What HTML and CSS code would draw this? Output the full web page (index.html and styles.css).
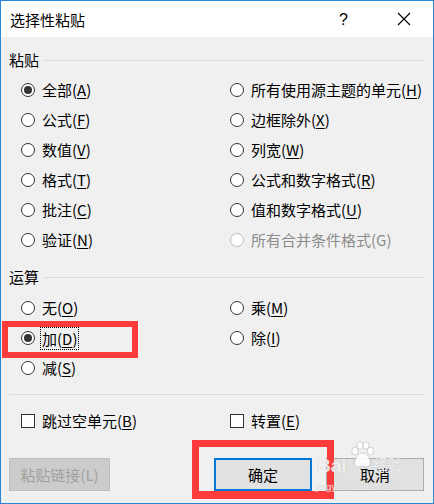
FILE: index.html
```html
<!DOCTYPE html>
<html lang="zh-CN">
<head>
    <meta charset="UTF-8" />
    <title>选择性粘贴</title>
    <link rel="stylesheet" href="styles.css">
</head>
<body>
<div class="dialog">
    <div class="titlebar">
        <span class="title">选择性粘贴</span>
        <span class="help">?</span>
        <span class="close">
            <svg width="14" height="14" viewBox="0 0 14 14"><path d="M1 1L13 13M13 1L1 13" stroke="#000" stroke-width="1.1" fill="none"/></svg>
        </span>
    </div>

    <div class="content">
        <div class="group-label"><span>粘贴</span><i class="rule"></i></div>
        <div class="options">
            <div class="opt"><span class="radio checked"></span>全部(<u>A</u>)</div>
            <div class="opt"><span class="radio"></span>所有使用源主题的单元(<u>H</u>)</div>
            <div class="opt"><span class="radio"></span>公式(<u>F</u>)</div>
            <div class="opt"><span class="radio"></span>边框除外(<u>X</u>)</div>
            <div class="opt"><span class="radio"></span>数值(<u>V</u>)</div>
            <div class="opt"><span class="radio"></span>列宽(<u>W</u>)</div>
            <div class="opt"><span class="radio"></span>格式(<u>T</u>)</div>
            <div class="opt"><span class="radio"></span>公式和数字格式(<u>R</u>)</div>
            <div class="opt"><span class="radio"></span>批注(<u>C</u>)</div>
            <div class="opt"><span class="radio"></span>值和数字格式(<u>U</u>)</div>
            <div class="opt"><span class="radio"></span>验证(<u>N</u>)</div>
            <div class="opt disabled"><span class="radio"></span>所有合并条件格式(G)</div>
        </div>

        <div class="group-label second"><span>运算</span><i class="rule"></i></div>
        <div class="options ops">
            <div class="opt"><span class="radio"></span>无(<u>O</u>)</div>
            <div class="opt"><span class="radio"></span>乘(<u>M</u>)</div>
            <div class="opt"><span class="radio checked"></span><span class="focus">加(<u>D</u>)</span></div>
            <div class="opt"><span class="radio"></span>除(<u>I</u>)</div>
            <div class="opt"><span class="radio"></span>减(<u>S</u>)</div>
            <div class="opt"></div>
        </div>

        <div class="separator"></div>

        <div class="options checks">
            <div class="opt"><span class="checkbox"></span>跳过空单元(<u>B</u>)</div>
            <div class="opt"><span class="checkbox"></span>转置(<u>E</u>)</div>
        </div>

        <div class="buttons">
            <button class="btn btn-disabled">粘贴链接(L)</button>
            <button class="btn btn-default">确定</button>
            <button class="btn">取消</button>
        </div>
    </div>

    <!-- 标注框 -->
    <div class="mark mark-add"></div>
    <div class="mark mark-ok"></div>

    <div class="watermark">
        <span class="wm-bai">Bai</span>
        <svg class="wm-paw" width="26" height="28" viewBox="0 0 26 28">
            <g fill="rgba(255,255,255,0.85)" stroke="rgba(170,170,170,0.6)" stroke-width="0.8">
                <ellipse cx="6" cy="10" rx="3.2" ry="4"/>
                <ellipse cx="11" cy="4.5" rx="3" ry="3.8"/>
                <ellipse cx="17" cy="4.5" rx="3" ry="3.8"/>
                <ellipse cx="21.5" cy="10" rx="3.2" ry="4"/>
                <path d="M13.5 12c-4 0-8 6-8 10c0 3 2.5 4 4.5 4c1.5 0 2.5-1 3.5-1s2 1 3.5 1c2 0 4.5-1 4.5-4c0-4-4-10-8-10z"/>
            </g>
        </svg>
        <span class="wm-jy">经验</span>
        <span class="wm-url">jingyan.baidu.com</span>
    </div>
</div>
</body>
</html>
```

FILE: styles.css
```css
* {
    box-sizing: border-box;
    margin: 0;
    padding: 0;
}

body {
    width: 434px;
    height: 504px;
    font-family: "Noto Sans CJK SC", "Microsoft YaHei", sans-serif;
    font-size: 15px;
    color: #000;
    background: #f0f0f0;
}

.dialog {
    position: relative;
    width: 434px;
    height: 504px;
    border: 1px solid #2a86d6;
    background: #f0f0f0;
    overflow: hidden;
}

.titlebar {
    height: 36px;
    background: #fff;
    display: flex;
    align-items: center;
    padding-top: 2px;
}

.title {
    margin-left: 9px;
    flex: 1;
    line-height: 20px;
}

.help {
    width: 14px;
    font-family: "Liberation Sans", sans-serif;
    font-size: 16px;
    margin-right: 44px;
}

.close {
    display: flex;
    margin-right: 22px;
    margin-top: -2px;
}

.content {
    padding: 0 9px 0 8px;
}

.group-label {
    display: flex;
    align-items: center;
    gap: 5px;
    height: 20px;
    line-height: 20px;
    margin-top: 13px;
}

.group-label.second {
    margin-top: 12px;
}

.rule {
    flex: 1;
    height: 1px;
    background: #dcdcdc;
    margin-top: 1px;
}

.options {
    display: grid;
    grid-template-columns: 209px 1fr;
    padding-left: 12px;
    margin-top: 5px;
}

.options.ops {
    margin-top: 6px;
}

.options.checks {
    margin-top: 11px;
}

.opt {
    height: 30px;
    display: flex;
    align-items: center;
    white-space: nowrap;
    line-height: 20px;
}

.opt u {
    text-decoration: underline;
    text-underline-offset: 2px;
    text-decoration-thickness: 1px;
}

.opt.disabled {
    color: #8c8c8c;
}

.radio {
    width: 14px;
    height: 14px;
    border: 1px solid #333;
    border-radius: 50%;
    background: #fff;
    margin-right: 7px;
    display: flex;
    align-items: center;
    justify-content: center;
    flex-shrink: 0;
}

.radio.checked::after {
    content: "";
    width: 8px;
    height: 8px;
    border-radius: 50%;
    background: #333;
}

.disabled .radio {
    border-color: #bcbcbc;
}

.checkbox {
    width: 14px;
    height: 14px;
    border: 1px solid #333;
    background: #fff;
    margin-right: 7px;
    flex-shrink: 0;
}

.focus {
    display: inline-block;
    line-height: 21px;
    padding: 0 1px;
    margin-left: -1px;
    outline: 1px dotted #000;
}

.separator {
    height: 1px;
    background: #dcdcdc;
    margin-top: 11px;
}

.buttons {
    display: flex;
    gap: 14px;
    margin-top: 22px;
}

.btn {
    height: 33px;
    width: 98px;
    font-family: inherit;
    font-size: 15px;
    color: #000;
    background: #e1e1e1;
    border: 1px solid #adadad;
}

.btn-disabled {
    width: 101px;
    color: #a0a0a0;
    background: #cccccc;
    border-color: #bfbfbf;
    margin-right: auto;
}

.btn-default {
    border: 2px solid #0078d7;
}

.mark {
    position: absolute;
    border: 6px solid #fe3b3b;
}

.mark-add {
    left: 1px;
    top: 320px;
    width: 136px;
    height: 37px;
}

.mark-ok {
    left: 191px;
    top: 439px;
    width: 142px;
    height: 59px;
    border-width: 7px;
    border-bottom-width: 8px;
}

.watermark {
    position: absolute;
    left: 314px;
    top: 440px;
    width: 100px;
    height: 54px;
    color: rgba(255, 255, 255, 0.8);
    text-shadow: 0 0 1px rgba(150, 150, 150, 0.6);
    font-family: "Liberation Sans", sans-serif;
    pointer-events: none;
}

.wm-bai {
    position: absolute;
    left: 2px;
    top: 14px;
    font-size: 19px;
    font-weight: bold;
}

.wm-paw {
    position: absolute;
    left: 34px;
    top: 0;
}

.wm-jy {
    position: absolute;
    left: 58px;
    top: 12px;
    font-family: "Noto Sans CJK SC", sans-serif;
    font-size: 15px;
}

.wm-url {
    position: absolute;
    left: 1px;
    top: 40px;
    font-size: 9.5px;
    letter-spacing: 0.2px;
}
```
